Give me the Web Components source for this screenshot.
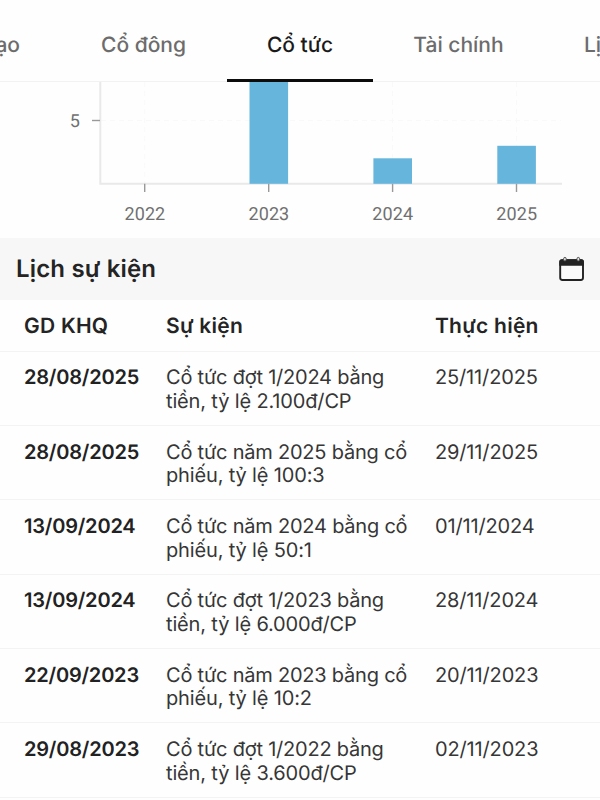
<!DOCTYPE html>
<html lang="vi">
<head>
<meta charset="UTF-8">
<meta name="viewport" content="width=device-width, initial-scale=1">
<title>Cổ tức</title>
<style>
  body {
    margin: 0; height: 800px; overflow: hidden; background: #fefefe;
    font-family: Inter, 'Liberation Sans', sans-serif; color: #2b2b2b;
    text-rendering: geometricPrecision;
  }
</style>
</head>
<body>
<dividend-page>
  <tab-bar>
    <tab-item style="width: 61px" edge="start">ạo</tab-item>
    <tab-item style="width: 165px">Cổ đông</tab-item>
    <tab-item style="width: 147px; margin-left: 1px; width: 146px" active>Cổ tức</tab-item>
    <tab-item style="width: 171px">Tài chính</tab-item>
    <tab-item style="width: 56px" edge="end">Lị</tab-item>
  </tab-bar>
  <dividend-chart></dividend-chart>
  <section-header>Lịch sự kiện</section-header>
  <event-table></event-table>
</dividend-page>

<script>
/**
 * Page column
 */
class DividendPage extends HTMLElement {
  constructor() {
    super();
    this.attachShadow({ mode: 'open' }).innerHTML = `
      <style>
        :host { display: flex; flex-direction: column; width: 600px; height: 800px; overflow: hidden; }
      </style>
      <slot></slot>
    `;
  }
}

/**
 * Tabs
 */
class TabBar extends HTMLElement {
  constructor() {
    super();
    this.attachShadow({ mode: 'open' }).innerHTML = `
      <style>
        :host {
          display: flex; flex: none; height: 82px; box-sizing: border-box;
          overflow: hidden; box-shadow: inset 0 -1px #f2f2f2;
        }
      </style>
      <slot></slot>
    `;
  }
}

class TabItem extends HTMLElement {
  constructor() {
    super();
    this.attachShadow({ mode: 'open' }).innerHTML = `
      <style>
        :host {
          display: flex; flex: none; justify-content: center; box-sizing: border-box;
          height: 82px; padding-top: 31px; overflow: hidden; white-space: nowrap;
          font-size: 21px; font-weight: 500; line-height: 30px; color: #6c6c6c;
        }
        :host([active]) { color: #1a1a1a; border-bottom: 3px solid #0c0c0c; }
        :host([edge="start"]) { justify-content: flex-end; padding-right: 41px; }
        :host([edge="end"]) { justify-content: flex-start; padding-left: 40px; }
      </style>
      <slot></slot>
    `;
  }
}

/**
 * Bar chart, only its lower part is scrolled into view
 */
class DividendChart extends HTMLElement {
  constructor() {
    super();
    this.attachShadow({ mode: 'open' });
  }

  connectedCallback() {
    const bars = [
      { year: 2022, x: 144.7, height: 0 },
      { year: 2023, x: 268.7, height: 102 },
      { year: 2024, x: 392.6, height: 25.5 },
      { year: 2025, x: 516.5, height: 38 }
    ];
    const base = 101.8;

    this.shadowRoot.innerHTML = `
      <style>
        :host { display: block; flex: none; height: 156px; }
        svg { display: block; }
        text { font-family: Roboto, sans-serif; font-size: 18px; fill: #707070; letter-spacing: 0.1px; }
        .grid { stroke: #f9f9f9; stroke-width: 1; stroke-dasharray: 5 4; }
        .axis { stroke: #e9e9e9; stroke-width: 2; fill: none; }
        .tick { stroke: #999; stroke-width: 1.4; }
        .bar { fill: #66b5dc; }
      </style>
      <svg width="600" height="156" viewBox="0 0 600 156">
        <path class="grid" d="M101 38.5H561"/>
        ${bars.map(b => `<path class="grid" d="M${b.x} 0V${base}"/>`).join('')}
        <path class="axis" d="M100.3 0V${base}H562"/>
        <path class="tick" d="M92 38.5H100"/>
        <text x="80" y="45" text-anchor="end">5</text>
        ${bars.map(b => `
          <rect class="bar" x="${b.x - 19.2}" y="${base - b.height}" width="38.6" height="${b.height}"/>
          <path class="tick" d="M${b.x} ${base}V110"/>
          <text x="${b.x + 0.2}" y="138" text-anchor="middle">${b.year}</text>
        `).join('')}
      </svg>
    `;
  }
}

/**
 * Section title with calendar button
 */
class SectionHeader extends HTMLElement {
  constructor() {
    super();
    this.attachShadow({ mode: 'open' }).innerHTML = `
      <style>
        :host {
          display: flex; flex: none; align-items: center; justify-content: space-between;
          box-sizing: border-box; height: 62px; padding: 0 15px 0 16px; background: #f7f7f7;
        }
        h2 {
          margin: 0; font-size: 24px; font-weight: 600; line-height: 30px;
          letter-spacing: 0.17px; color: #242424;
        }
        svg { display: block; }
      </style>
      <h2><slot></slot></h2>
      <svg width="27" height="26" viewBox="0 0 27 26">
        <rect x="2.2" y="4.2" width="22.8" height="19.8" rx="2.2" fill="#fafafa" stroke="#222" stroke-width="1.9"/>
        <path d="M1.3 9.7V5.8a2.5 2.5 0 0 1 2.5-2.5h19.6a2.5 2.5 0 0 1 2.5 2.5v3.9z" fill="#222"/>
        <g fill="#dcdcdc" stroke="#444" stroke-width="0.9">
          <rect x="5.6" y="1.4" width="2.6" height="3.6" rx="1.3"/>
          <rect x="19" y="1.4" width="2.6" height="3.6" rx="1.3"/>
        </g>
      </svg>
    `;
  }
}

/**
 * Event list
 */
class EventTable extends HTMLElement {
  constructor() {
    super();
    this.attachShadow({ mode: 'open' });
  }

  connectedCallback() {
    const events = [
      ['28/08/2025', 'Cổ tức đợt 1/2024 bằng<br>tiền, tỷ lệ 2.100đ/CP', '25/11/2025'],
      ['28/08/2025', 'Cổ tức năm 2025 bằng cổ<br>phiếu, tỷ lệ 100:3', '29/11/2025'],
      ['13/09/2024', 'Cổ tức năm 2024 bằng cổ<br>phiếu, tỷ lệ 50:1', '01/11/2024'],
      ['13/09/2024', 'Cổ tức đợt 1/2023 bằng<br>tiền, tỷ lệ 6.000đ/CP', '28/11/2024'],
      ['22/09/2023', 'Cổ tức năm 2023 bằng cổ<br>phiếu, tỷ lệ 10:2', '20/11/2023'],
      ['29/08/2023', 'Cổ tức đợt 1/2022 bằng<br>tiền, tỷ lệ 3.600đ/CP', '02/11/2023']
    ];

    this.shadowRoot.innerHTML = `
      <style>
        :host { display: block; flex: none; }
        .row {
          display: grid; grid-template-columns: 142px 269px 1fr; box-sizing: border-box;
          height: 74.33px; padding: 14.5px 0 0 24px; border-bottom: 1px solid #f3f3f3;
          font-size: 20px; line-height: 23.7px; letter-spacing: -0.15px;
          white-space: nowrap; color: #363636;
        }
        .head {
          height: 51.8px; padding-top: 15px; font-size: 21px; font-weight: 600;
          letter-spacing: 0.25px; color: #242424;
        }
        .date { font-weight: 600; letter-spacing: -0.2px; color: #222; }
        .text::first-line { letter-spacing: -0.22px; }
      </style>
      <div class="row head"><span>GD KHQ</span><span>Sự kiện</span><span>Thực hiện</span></div>
      ${events.map(([date, text, done]) => `
        <div class="row">
          <span class="date">${date}</span><span class="text">${text}</span><span>${done}</span>
        </div>
      `).join('')}
    `;
  }
}

customElements.define('dividend-page', DividendPage);
customElements.define('tab-bar', TabBar);
customElements.define('tab-item', TabItem);
customElements.define('dividend-chart', DividendChart);
customElements.define('section-header', SectionHeader);
customElements.define('event-table', EventTable);
</script>
</body>
</html>
